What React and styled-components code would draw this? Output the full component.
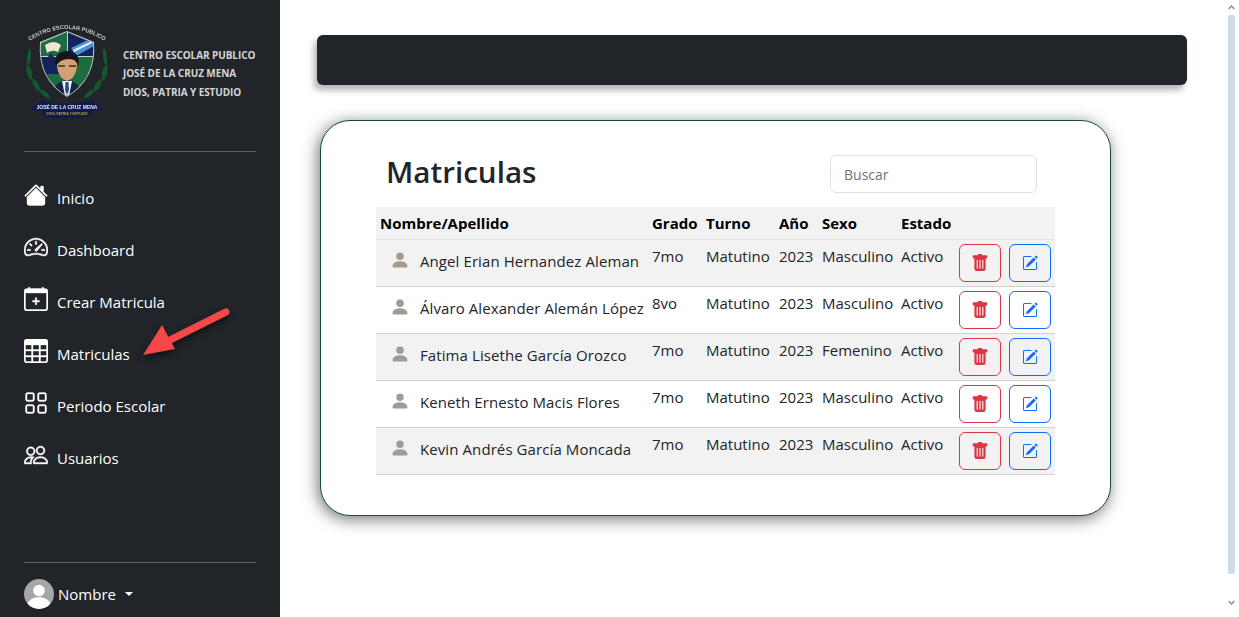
import React from 'react';
import styled, { createGlobalStyle } from 'styled-components';
import {
  BsHouseFill, BsSpeedometer2, BsCalendarPlus, BsTable, BsGrid, BsPeople,
  BsPersonFill, BsTrashFill, BsPencilSquare,
} from 'react-icons/bs';

const Global = createGlobalStyle`
  html, body { margin: 0; height: 100%; overflow: hidden; background: #fff; }
  body { font-family: "Open Sans", "Noto Sans", "Liberation Sans", sans-serif; color: #212529; }
  * { box-sizing: border-box; }
`;

const menu = [
  { label: 'Inicio', Icon: BsHouseFill },
  { label: 'Dashboard', Icon: BsSpeedometer2 },
  { label: 'Crear Matricula', Icon: BsCalendarPlus },
  { label: 'Matriculas', Icon: BsTable },
  { label: 'Periodo Escolar', Icon: BsGrid },
  { label: 'Usuarios', Icon: BsPeople },
];

const students = [
  { name: 'Angel Erian Hernandez Aleman', grade: '7mo', sex: 'Masculino' },
  { name: 'Álvaro Alexander Alemán López', grade: '8vo', sex: 'Masculino' },
  { name: 'Fatima Lisethe García Orozco', grade: '7mo', sex: 'Femenino' },
  { name: 'Keneth Ernesto Macis Flores', grade: '7mo', sex: 'Masculino' },
  { name: 'Kevin Andrés García Moncada', grade: '7mo', sex: 'Masculino' },
];

function Logo() {
  return (
    <LogoMark width="88" height="96" viewBox="0 0 88 96">
      <defs>
        <path id="arc" d="M4 18 Q43 -8 82 18" fill="none" />
        <clipPath id="shield"><path d="M43 8 L69 19 Q72 54 43 72 Q14 54 17 19Z" /></clipPath>
      </defs>
      <text fontSize="5.600" fill="#c9c9c9" fontFamily="Liberation Sans, sans-serif" fontWeight="700">
        <textPath href="#arc" startOffset="50%" textAnchor="middle">CENTRO ESCOLAR PUBLICO</textPath>
      </text>
      <g fill="#125a2e">
        <path d="M6 23 Q1 34 4 42 Q9 34 6 23Z" />
        <path d="M3 40 Q1 50 7 57 Q11 48 3 40Z" />
        <path d="M8 54 Q8 63 15 68 Q18 60 8 54Z" />
        <path d="M15 65 Q17 72 26 75 Q25 67 15 65Z" />
        <path d="M80 23 Q85 34 82 42 Q77 34 80 23Z" />
        <path d="M83 40 Q85 50 79 57 Q75 48 83 40Z" />
        <path d="M78 54 Q78 63 71 68 Q68 60 78 54Z" />
        <path d="M71 65 Q69 72 60 75 Q61 67 71 65Z" />
      </g>
      <path d="M43 7 L70 18 Q73 55 43 73 Q13 55 16 18Z" fill="#c9d2cc" />
      <g clipPath="url(#shield)">
        <rect x="14" y="8" width="29" height="24" fill="#1d6b40" />
        <rect x="44" y="8" width="28" height="24" fill="#14235c" />
        <rect x="14" y="33" width="29" height="24" fill="#14235c" />
        <rect x="44" y="33" width="28" height="24" fill="#1d6b40" />
        <rect x="14" y="50" width="60" height="24" fill="#1d6b40" />
        <path d="M47 24 L72 12 L72 21 L52 32Z" fill="#4f8fd8" />
        <path d="M49 26 L72 15 L72 17 L50 28Z" fill="#f1f5fa" />
        <path d="M21 21 Q30 15 37 21 L34 28 Q28 25 23 29Z" fill="#ece6d2" />
        <path d="M23 34 L27 29 L31 34Z" fill="#1c2c55" />
        <path d="M28 72 Q29 58 43 56 Q57 58 58 72Z" fill="#16223f" />
        <path d="M38 57 L48 57 L45 72 L41 72Z" fill="#f2f2f2" />
        <path d="M41.500 58 L44.500 58 L45 66 L43 71 L41 66Z" fill="#1a4f91" />
      </g>
      <path d="M43 57 Q35 55 33 43 Q32 32 43 31 Q54 32 53 43 Q51 55 43 57Z" fill="#d4a074" />
      <path d="M32 43 Q28 28 43 27 Q58 28 54 43 Q53 35 45 35 Q35 35 32 43Z" fill="#17171b" />
      <path d="M34 42 H41 M45 42 H52" stroke="#3a2a20" strokeWidth="1.300" />
      <path d="M6 86 L18 76 Q43 84 68 76 L80 86 L69 87 L66 92 Q43 97 20 92 L17 87Z" fill="#101a52" />
      <text x="43" y="84.500" fontSize="5" fill="#e7e7e7" textAnchor="middle" fontFamily="Liberation Sans, sans-serif" fontWeight="700">JOSÉ DE LA CRUZ MENA</text>
      <text x="43" y="91" fontSize="3.400" fill="#c9a227" textAnchor="middle" fontFamily="Liberation Sans, sans-serif" fontWeight="700">DIOS, PATRIA Y ESTUDIO</text>
    </LogoMark>
  );
}

function Avatar() {
  return (
    <svg width="30" height="30" viewBox="0 0 30 30">
      <defs>
        <clipPath id="round"><circle cx="15" cy="15" r="15" /></clipPath>
      </defs>
      <g clipPath="url(#round)">
        <rect width="30" height="30" fill="#a6a6a6" />
        <circle cx="15" cy="11.500" r="5.800" fill="#fff" />
        <ellipse cx="15" cy="27" rx="12" ry="9" fill="#fff" />
      </g>
    </svg>
  );
}

export default function App() {
  return (
    <>
      <Global />
      <Page>
        <Sidebar>
          <Brand>
            <Logo />
            <BrandText>
              <span>CENTRO ESCOLAR PUBLICO</span>
              <span>JOSÉ DE LA CRUZ MENA</span>
              <span>DIOS, PATRIA Y ESTUDIO</span>
            </BrandText>
          </Brand>
          <Divider />
          <Nav>
            {menu.map(({ label, Icon }) => (
              <NavItem key={label}>
                <Icon size={24} />
                <span>{label}</span>
              </NavItem>
            ))}
            <ArrowMark width="96" height="58" viewBox="0 0 96 58">
              <path d="M86 7 L24 38" stroke="#f44848" strokeWidth="7" strokeLinecap="round" />
              <path d="M3 50 L22 20 L35 44Z" fill="#f44848" />
            </ArrowMark>
          </Nav>
          <SidebarFoot>
            <Divider />
            <UserRow>
              <Avatar />
              <span>Nombre</span>
              <Caret />
            </UserRow>
          </SidebarFoot>
        </Sidebar>

        <Main>
          <TopBar />
          <Card>
            <CardHead>
              <Title>Matriculas</Title>
              <Search placeholder="Buscar" />
            </CardHead>
            <Table>
              <colgroup>
                <col style={{ width: 272 }} />
                <col style={{ width: 54 }} />
                <col style={{ width: 73 }} />
                <col style={{ width: 43 }} />
                <col style={{ width: 79 }} />
                <col style={{ width: 54 }} />
                <col />
              </colgroup>
              <thead>
                <tr>
                  <Th>Nombre/Apellido</Th>
                  <Th>Grado</Th>
                  <Th>Turno</Th>
                  <Th>Año</Th>
                  <Th>Sexo</Th>
                  <Th>Estado</Th>
                  <Th />
                </tr>
              </thead>
              <tbody>
                {students.map((s, i) => (
                  <Row key={s.name} $striped={i % 2 === 0}>
                    <Td>
                      <NameCell>
                        <PersonIcon size={20} />
                        <span>{s.name}</span>
                      </NameCell>
                    </Td>
                    <Td>{s.grade}</Td>
                    <Td>Matutino</Td>
                    <Td>2023</Td>
                    <Td>{s.sex}</Td>
                    <Td>Activo</Td>
                    <Td>
                      <Actions>
                        <ActionButton $color="#dc3545"><BsTrashFill size={18} /></ActionButton>
                        <ActionButton $color="#0d6efd"><BsPencilSquare size={16} /></ActionButton>
                      </Actions>
                    </Td>
                  </Row>
                ))}
              </tbody>
            </Table>
          </Card>
        </Main>

        <Scroller>
          <ScrollArrow viewBox="0 0 10 6"><path d="M1 5 L5 1 L9 5" /></ScrollArrow>
          <ScrollThumb />
          <ScrollArrow viewBox="0 0 10 6"><path d="M1 1 L5 5 L9 1" /></ScrollArrow>
        </Scroller>
      </Page>
    </>
  );
}

const Page = styled.div`
  display: flex;
  width: 1239px;
  height: 617px;
  overflow: hidden;
`;

const Sidebar = styled.aside`
  width: 280px;
  flex: none;
  background: #212529;
  color: #fff;
  padding: 24px 24px 0;
  display: flex;
  flex-direction: column;
`;

const Brand = styled.div`
  display: flex;
  align-items: center;
  gap: 11px;
  height: 96px;
  margin-bottom: 31px;
`;

const LogoMark = styled.svg`
  flex: none;
  filter: blur(0.3px);
`;

const BrandText = styled.div`
  display: flex;
  flex-direction: column;
  gap: 4.500px;
  font-size: 10px;
  font-weight: 700;
  line-height: 14px;
  color: #d4d5d6;
  white-space: nowrap;
  margin-top: 2px;
  span { letter-spacing: -0.08px; }
`;

const Divider = styled.hr`
  width: 100%;
  height: 1px;
  margin: 0;
  border: 0;
  background: #5b5e62;
`;

const Nav = styled.nav`
  position: relative;
  display: flex;
  flex-direction: column;
  gap: 12px;
  margin-top: 26px;
  flex: 1;
`;

const NavItem = styled.a`
  display: flex;
  align-items: center;
  gap: 9px;
  height: 40px;
  font-size: 15px;
  color: #fff;
  white-space: nowrap;
  svg {
    margin-top: -6px;
    stroke: currentColor;
    stroke-width: 0.25;
  }
`;

const ArrowMark = styled.svg`
  position: absolute;
  left: 116px;
  top: 127px;
  filter: drop-shadow(0 3px 3px rgba(0, 0, 0, 0.55));
`;

const SidebarFoot = styled.div`
  display: flex;
  flex-direction: column;
  height: 55px;
`;

const UserRow = styled.div`
  display: flex;
  align-items: center;
  margin-top: 16px;
  font-size: 15px;
  span { margin-left: 4px; }
`;

const Caret = styled.i`
  width: 0;
  height: 0;
  margin-left: 9px;
  border-top: 4px solid #fff;
  border-left: 4px solid transparent;
  border-right: 4px solid transparent;
`;

const Main = styled.main`
  flex: 1;
  min-width: 0;
  padding: 35px 41px 0 37px;
`;

const TopBar = styled.div`
  height: 50px;
  width: 870px;
  background: #212529;
  border-radius: 6px;
  box-shadow: -3px 5px 6px rgba(0, 0, 0, 0.3);
`;

const Card = styled.section`
  width: 791px;
  height: 396px;
  margin: 35px 0 0 3px;
  padding: 34px 56px 0 55px;
  background: #fff;
  border: 1px solid #0f5132;
  border-radius: 30px;
  box-shadow: -2px 3px 16px rgba(0, 0, 0, 0.55);
`;

const CardHead = styled.div`
  display: flex;
  justify-content: space-between;
  align-items: center;
  height: 38px;
  margin-bottom: 14px;
  padding: 0 17px 0 10px;
`;

const Title = styled.h1`
  margin: -5px 0 0;
  font-size: 29.600px;
  font-weight: 600;
  color: #212529;
`;

const Search = styled.input`
  width: 207px;
  height: 38px;
  padding: 6px 13px;
  font: 14px "Open Sans", sans-serif;
  border: 1px solid #dee2e6;
  border-radius: 6px;
  &::placeholder { color: #6c757d; opacity: 1; }
`;

const Table = styled.table`
  width: 679px;
  table-layout: fixed;
  border-collapse: collapse;
  font-size: 15px;
  color: #212529;
`;

const Th = styled.th`
  height: 32px;
  padding: 0 4px;
  background: #f2f2f2;
  border-bottom: 1px solid #dee2e6;
  text-align: left;
  font-size: 15px;
  font-weight: 700;
  color: #000;
  white-space: nowrap;
`;

const Row = styled.tr`
  background: ${props => (props.$striped ? '#f2f2f2' : '#fff')};
`;

const Td = styled.td`
  height: 47px;
  padding: 4px;
  vertical-align: top;
  border-bottom: 1px solid #d4d0d0;
  white-space: nowrap;
  line-height: 24px;
`;

const NameCell = styled.div`
  display: flex;
  align-items: center;
  gap: 10px;
  padding: 5px 0 0 10px;
  letter-spacing: 0.09px;
`;

const PersonIcon = styled(BsPersonFill)`
  color: #a39a96;
  margin-top: -2px;
`;

const Actions = styled.div`
  display: flex;
  gap: 8px;
  justify-content: flex-end;
`;

const ActionButton = styled.button`
  width: 42px;
  height: 38px;
  padding: 0;
  display: flex;
  align-items: center;
  justify-content: center;
  background: transparent;
  color: ${props => props.$color};
  border: 1px solid ${props => props.$color};
  border-radius: 6px;
`;

const Scroller = styled.div`
  width: 11px;
  flex: none;
  padding-right: 4px;
  display: flex;
  flex-direction: column;
  align-items: center;
  padding-top: 5px;
`;

const ScrollArrow = styled.svg`
  width: 7px;
  height: 5px;
  flex: none;
  path { fill: none; stroke: #8a8a8a; stroke-width: 2; }
`;

const ScrollThumb = styled.div`
  width: 7px;
  height: 559px;
  margin: 5px 0 26px;
  background: #cfdbe5;
  border-radius: 2px;
`;
